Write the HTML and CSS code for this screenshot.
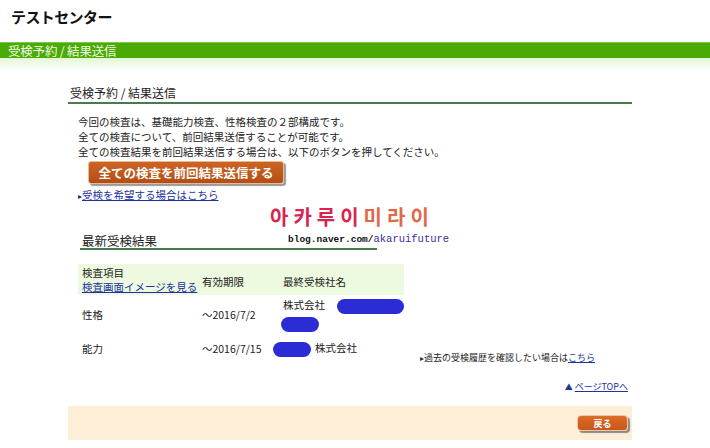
FILE: index.html
```html
<!DOCTYPE html>
<html lang="ja">
<head>
    <meta charset="UTF-8">
    <meta name="viewport" content="width=device-width, initial-scale=1.0">
    <title>テストセンター</title>
    <link rel="stylesheet" href="styles.css">
</head>
<body>
    <div class="site-head">
        <h1>テストセンター</h1>
    </div>
    <div class="nav-bar">受検予約 / 結果送信</div>
    <div class="nav-fade"></div>

    <div class="main">
        <h2 class="sec-title">受検予約 / 結果送信</h2>

        <div class="intro">
            <p>今回の検査は、基礎能力検査、性格検査の２部構成です。</p>
            <p>全ての検査について、前回結果送信することが可能です。</p>
            <p>全ての検査結果を前回結果送信する場合は、以下のボタンを押してください。</p>
        </div>

        <button class="send-all">全ての検査を前回結果送信する</button>

        <p class="apply-link"><span class="arrow">▸</span><a href="#">受検を希望する場合はこちら</a></p>

        <div class="result-head">
            <h3>最新受検結果</h3>
            <div class="watermark">
                <div class="wm-kr"><span class="wm-red">아카루이</span><span class="wm-orange">미라이</span></div>
                <div class="wm-url">blog.naver.com/<span>akaruifuture</span></div>
            </div>
        </div>

        <div class="result-wrap">
            <table class="result-table">
                <tr class="head-row">
                    <th class="col-item">検査項目<br><a href="#">検査画面イメージを見る</a></th>
                    <th class="col-limit">有効期限</th>
                    <th class="col-company">最終受検社名</th>
                </tr>
                <tr>
                    <td>性格</td>
                    <td>～2016/7/2</td>
                    <td class="company">株式会社<span class="blot blot-a"></span><br><span class="blot blot-b"></span></td>
                </tr>
                <tr>
                    <td>能力</td>
                    <td>～2016/7/15</td>
                    <td class="company"><span class="blot blot-c"></span>株式会社</td>
                </tr>
            </table>
            <p class="history"><span class="arrow">▸</span>過去の受検履歴を確認したい場合は<a href="#">こちら</a></p>
        </div>

        <p class="page-top"><span class="tri">▲</span> <a href="#">ページTOPへ</a></p>

        <div class="foot-bar">
            <button class="back">戻る</button>
        </div>
    </div>
</body>
</html>
```

FILE: styles.css
```css
body {
    margin: 0;
    font-family: "Noto Sans CJK JP", "Liberation Sans", sans-serif;
    color: #222;
    background-color: #fff;
}
a {
    color: #2233a0;
}
.site-head {
    height: 42px;
    box-sizing: border-box;
    padding: 7px 0 0 11px;
}
.site-head h1 {
    margin: 0;
    font-size: 15px;
    line-height: 20px;
    letter-spacing: -0.6px;
    color: #111;
}
.nav-bar {
    height: 16px;
    line-height: 15px;
    padding-left: 8px;
    font-size: 12.5px;
    color: #f0f8e6;
    background-color: #4aab05;
    border-top: 1px solid #7ec94c;
    box-sizing: border-box;
    letter-spacing: -0.2px;
}
.nav-fade {
    height: 13px;
    background: linear-gradient(#e4f7d4, #fff);
}
.main {
    width: 564px;
    margin-left: 68px;
}
.sec-title {
    margin: 14px 0 0;
    padding: 0 0 1px 2px;
    font-size: 12px;
    line-height: 16px;
    font-weight: normal;
    border-bottom: 2px solid #4b7a4b;
}
.intro {
    margin-top: 10px;
    padding-left: 10px;
    font-size: 10.5px;
    line-height: 15px;
}
.intro p {
    margin: 0;
}
.send-all {
    display: block;
    margin: 2px 0 0 20px;
    width: 196px;
    height: 23px;
    padding: 0;
    font-family: inherit;
    font-size: 12.5px;
    font-weight: bold;
    color: #fff;
    background: linear-gradient(#cc6424, #b24e16);
    border: 1px solid #eab892;
    border-radius: 3px;
    box-shadow: 2px 2px 1px #9a9a9a;
}
.apply-link {
    margin: 4px 0 0;
    padding-left: 10px;
    font-size: 10.5px;
    line-height: 14px;
}
.arrow {
    font-size: 8px;
    color: #1d2a70;
}
.result-head {
    position: relative;
    margin: 30px 0 0 12px;
    width: 297px;
    border-bottom: 2px solid #4b7a4b;
}
.result-head h3 {
    margin: 0;
    padding-left: 2px;
    font-size: 12.5px;
    line-height: 15px;
    font-weight: normal;
}
.watermark {
    position: absolute;
    left: 190px;
    top: -28px;
    white-space: nowrap;
}
.wm-kr {
    font-size: 20px;
    line-height: 24px;
    font-weight: bold;
    letter-spacing: 5px;
    font-family: "Noto Sans CJK KR", sans-serif;
}
.wm-red {
    color: #d8244e;
}
.wm-orange {
    color: #e2684c;
}
.wm-url {
    padding-left: 18px;
    margin-top: 4px;
    font-family: "Liberation Mono", monospace;
    font-size: 9.5px;
    font-weight: bold;
    line-height: 13px;
    color: #111;
}
.wm-url span {
    font-size: 10.5px;
    font-weight: normal;
    color: #3a2ea0;
}
.result-wrap {
    display: flex;
    align-items: flex-end;
    margin-top: 14px;
}
.result-table {
    margin-left: 10px;
    width: 326px;
    border-collapse: collapse;
    font-size: 10.5px;
}
.result-table th,
.result-table td {
    padding: 0 0 0 4px;
    text-align: left;
    font-weight: normal;
    vertical-align: middle;
    white-space: nowrap;
}
.head-row {
    background-color: #edfadf;
}
.head-row th {
    height: 31px;
    line-height: 14px;
}
.head-row .col-limit,
.head-row .col-company {
    height: 26px;
    padding-top: 5px;
}
.col-item {
    width: 116px;
}
.col-limit {
    width: 78px;
}
.result-table td {
    height: 38px;
    line-height: 17px;
}
.result-table tr:last-child td {
    height: 30px;
}
.company {
    padding-top: 3px;
}
.blot {
    display: inline-block;
    height: 15px;
    vertical-align: middle;
    background-color: #2c2cd4;
    border-radius: 8px;
}
.blot-a {
    width: 67px;
    margin-left: 12px;
}
.blot-b {
    width: 38px;
    margin-left: -2px;
}
.blot-c {
    width: 38px;
    margin-left: -10px;
    margin-right: 4px;
}
.history {
    margin: 0 0 -1px 16px;
    font-size: 9px;
    line-height: 12px;
    white-space: nowrap;
}
.page-top {
    margin: 18px 0 0;
    padding-right: 4px;
    text-align: right;
    font-size: 9px;
    line-height: 12px;
}
.tri {
    color: #1d3a8a;
    font-size: 8px;
}
.foot-bar {
    margin-top: 13px;
    height: 34px;
    box-sizing: border-box;
    padding: 9px 4px 0 0;
    background-color: #fdeed8;
    text-align: right;
}
.back {
    width: 51px;
    height: 16px;
    padding: 0;
    font-family: inherit;
    font-size: 9px;
    font-weight: bold;
    color: #fff;
    background: linear-gradient(#dc6c26, #c9561a);
    border: 1px solid #f2c6a2;
    border-radius: 4px;
    box-shadow: 2px 2px 1px #8a8a8a;
    vertical-align: top;
}
```
